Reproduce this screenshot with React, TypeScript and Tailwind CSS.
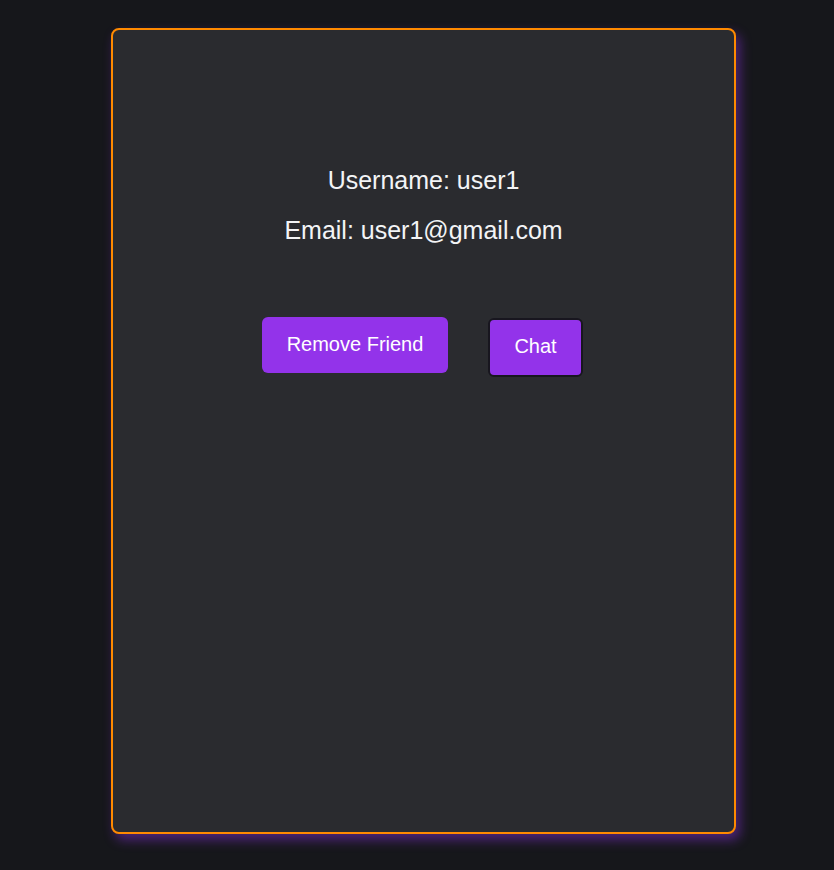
import React from 'react';

const App: React.FC = () => {
  return (
    <div className="min-h-[870px] w-full bg-[#16171b] pt-[28px] font-['Liberation_Sans',Arial,sans-serif]">
      <div className="ml-[111px] h-[806px] w-[625px] rounded-lg border-2 border-[#ff8a00] bg-[#2a2b2f] shadow-[4px_6px_12px_rgba(147,51,234,0.45)]">
        <div className="flex flex-col items-center pt-[136px] text-[25px] leading-[29px] text-[#f3f4f6]">
          <p>Username: user1</p>
          <p className="mt-[21px]">Email: user1@gmail.com</p>
        </div>
        <div className="mt-[72px] flex items-start justify-center gap-[40px] pr-[2px]">
          <button className="h-[56px] w-[186px] rounded-md bg-[#9333ea] pb-[2px] text-[20px] text-white">
            Remove Friend
          </button>
          <button className="mt-[1px] h-[59px] w-[95px] rounded-md border-2 border-[#18161f] bg-[#9333ea] pb-[3px] text-[20px] text-white">
            Chat
          </button>
        </div>
      </div>
    </div>
  );
};

export default App;
